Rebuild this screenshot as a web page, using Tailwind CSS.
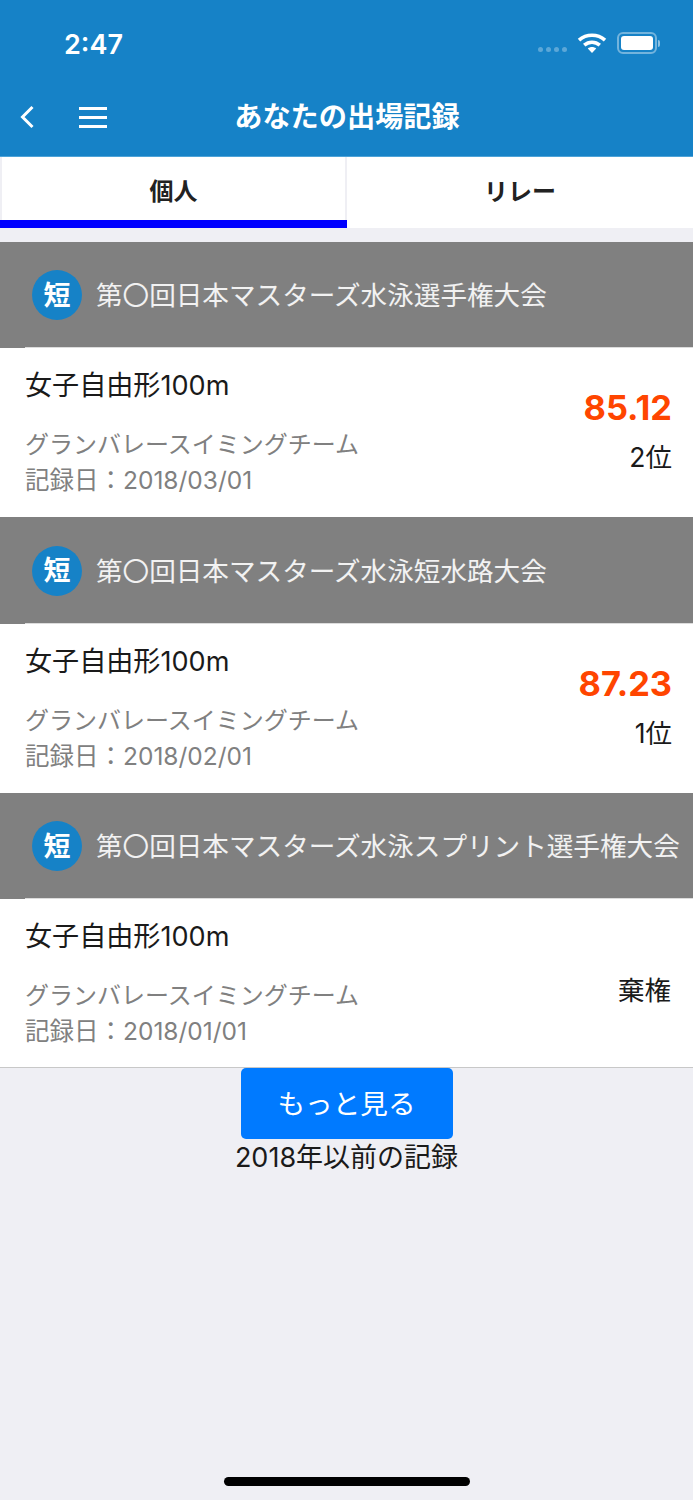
<!DOCTYPE html>
<html lang="ja">
<head>
    <meta charset="UTF-8">
    <meta name="viewport" content="width=device-width, initial-scale=1.0">
    <title>あなたの出場記録</title>
    <script src="https://cdn.jsdelivr.net/npm/@tailwindcss/browser@4"></script>
</head>
<body class="bg-[#efeff4] h-[1500px] overflow-hidden relative font-['Inter','Noto_Sans_CJK_JP',sans-serif]">
    <!-- Status bar + nav -->
    <header class="bg-[#1682c7] h-[157px] border-b border-[#4da3d8] text-white">
        <div class="h-[76px] flex items-start justify-between">
            <span class="ml-[64px] mt-[27px] text-[27px] leading-[36px] font-semibold">2:47</span>
            <div class="flex items-center mt-[32px] mr-[33px]">
                <div class="flex gap-[3px] mt-[12px] mr-[10px]">
                    <span class="w-[5px] h-[5px] rounded-full bg-white/30"></span>
                    <span class="w-[5px] h-[5px] rounded-full bg-white/30"></span>
                    <span class="w-[5px] h-[5px] rounded-full bg-white/30"></span>
                    <span class="w-[5px] h-[5px] rounded-full bg-white/30"></span>
                </div>
                <svg class="mr-[10px]" width="30" height="22" viewBox="0 0 30 22" fill="none">
                    <path d="M2 8.2C9.4 1.6 20.6 1.6 28 8.2" stroke="white" stroke-width="3.6"/>
                    <path d="M7.2 13.2C11.8 9.2 18.2 9.2 22.8 13.2" stroke="white" stroke-width="3.6"/>
                    <path d="M10.8 16.4C13.2 14.4 16.8 14.4 19.2 16.4L15 21Z" fill="white"/>
                </svg>
                <div class="w-[40px] h-[22px] rounded-[6px] border-2 border-white/40 p-[2px]">
                    <div class="w-full h-full rounded-[3px] bg-white"></div>
                </div>
                <div class="w-[2px] h-[7px] ml-[1px] bg-white/50 rounded-r-full"></div>
            </div>
        </div>
        <div class="h-[80px] relative flex items-center justify-center">
            <svg class="absolute left-[19px] top-[29px]" width="16" height="24" viewBox="0 0 16 24" fill="none">
                <path d="M13.5 2L3.5 12L13.5 22" stroke="white" stroke-width="3"/>
            </svg>
            <div class="absolute left-[79px] top-[31px] w-[28px] flex flex-col gap-[6px]">
                <span class="h-[3px] bg-white"></span>
                <span class="h-[3px] bg-white"></span>
                <span class="h-[3px] bg-white"></span>
            </div>
            <h1 class="text-[28.2px] font-bold mt-[3px] ml-[1px]">あなたの出場記録</h1>
        </div>
    </header>

    <!-- Tabs -->
    <nav class="flex h-[71px] bg-white">
        <div class="w-[347px] flex flex-col">
            <button class="flex-1 border-x-2 border-[#efeff4] text-[24px] font-bold text-[#222] pt-[6px]">個人</button>
            <div class="h-[8px] bg-[#0000ff]"></div>
        </div>
        <button class="flex-1 text-[24px] font-bold text-[#222] pb-[1px]">リレー</button>
    </nav>

    <main class="mt-[14px]">
        <section>
            <div class="h-[105px] bg-[#808080] flex items-center pl-[32px] pt-[1px]">
                <span class="w-[50px] h-[50px] rounded-full bg-[#1682c7] flex items-center justify-center text-white text-[27px] font-bold pt-[2px]">短</span>
                <h2 class="ml-[14px] mt-[2px] text-[26.6px] text-white/90 whitespace-nowrap">第〇回日本マスターズ水泳選手権大会</h2>
            </div>
            <div class="h-px bg-[#808080] pl-[25px]"><div class="h-px bg-[#dcdcdc]"></div></div>
            <div class="h-[169px] bg-white pl-[25px] pr-[21px] flex justify-between">
                <div>
                    <p class="mt-[20px] text-[27.1px] leading-[36px] text-[#1a1a1a]">女子自由形100m</p>
                    <p class="mt-[24px] text-[24px] leading-[34px] text-[#808080]">グランバレースイミングチーム</p>
                    <p class="mt-[1px] text-[24.5px] leading-[34px] text-[#808080]">記録日：2018/03/01</p>
                </div>
                <div class="text-right">
                    <p class="mt-[38px] text-[34.4px] leading-[44px] font-bold text-[#ff4500]">85.12</p>
                    <p class="mt-[9px] text-[26.5px] leading-[36px] text-[#1a1a1a]">2位</p>
                </div>
            </div>
        </section>
        <section>
            <div class="h-[106px] bg-[#808080] flex items-center pl-[32px] pt-[1px]">
                <span class="w-[50px] h-[50px] rounded-full bg-[#1682c7] flex items-center justify-center text-white text-[27px] font-bold pt-[2px]">短</span>
                <h2 class="ml-[14px] mt-[2px] text-[26.6px] text-white/90 whitespace-nowrap">第〇回日本マスターズ水泳短水路大会</h2>
            </div>
            <div class="h-px bg-[#808080] pl-[25px]"><div class="h-px bg-[#dcdcdc]"></div></div>
            <div class="h-[169px] bg-white pl-[25px] pr-[21px] flex justify-between">
                <div>
                    <p class="mt-[20px] text-[27.1px] leading-[36px] text-[#1a1a1a]">女子自由形100m</p>
                    <p class="mt-[24px] text-[24px] leading-[34px] text-[#808080]">グランバレースイミングチーム</p>
                    <p class="mt-[1px] text-[24.5px] leading-[34px] text-[#808080]">記録日：2018/02/01</p>
                </div>
                <div class="text-right">
                    <p class="mt-[38px] text-[34.4px] leading-[44px] font-bold text-[#ff4500]">87.23</p>
                    <p class="mt-[9px] text-[26.5px] leading-[36px] text-[#1a1a1a]">1位</p>
                </div>
            </div>
        </section>
        <section>
            <div class="h-[105px] bg-[#808080] flex items-center pl-[32px] pt-[1px]">
                <span class="w-[50px] h-[50px] rounded-full bg-[#1682c7] flex items-center justify-center text-white text-[27px] font-bold pt-[2px]">短</span>
                <h2 class="ml-[14px] mt-[2px] text-[26.6px] text-white/90 whitespace-nowrap">第〇回日本マスターズ水泳スプリント選手権大会</h2>
            </div>
            <div class="h-px bg-[#808080] pl-[25px]"><div class="h-px bg-[#dcdcdc]"></div></div>
            <div class="h-[169px] bg-white pl-[25px] pr-[22px] flex justify-between border-b border-b-[#c8c8c8]">
                <div>
                    <p class="mt-[20px] text-[27.1px] leading-[36px] text-[#1a1a1a]">女子自由形100m</p>
                    <p class="mt-[24px] text-[24px] leading-[34px] text-[#808080]">グランバレースイミングチーム</p>
                    <p class="mt-[1px] text-[24.5px] leading-[34px] text-[#808080]">記録日：2018/01/01</p>
                </div>
                <div class="text-right">
                    <p class="mt-[73px] text-[26.5px] leading-[36px] text-[#1a1a1a]">棄権</p>
                </div>
            </div>
        </section>

        <div class="flex flex-col items-center">
            <button class="w-[212px] h-[71px] rounded-[5px] bg-[#007aff] text-white text-[27.6px] pt-[2px]">もっと見る</button>
            <p class="mt-[1px] text-[27px] leading-[36px] text-[#1a1a1a]">2018年以前の記録</p>
        </div>
    </main>

    <!-- home indicator -->
    <div class="absolute left-[224px] top-[1477px] w-[246px] h-[9px] rounded-full bg-black"></div>
</body>
</html>
